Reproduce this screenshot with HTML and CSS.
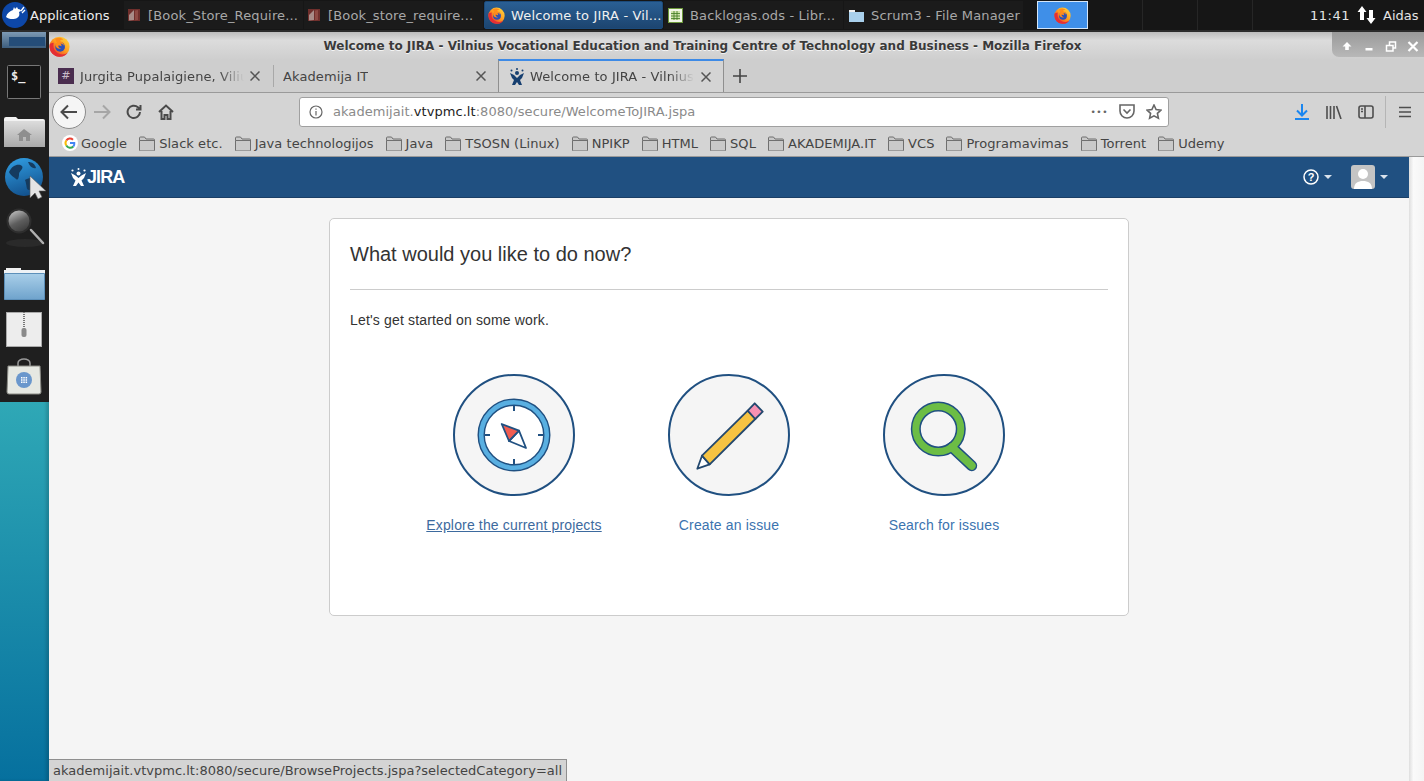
FILE: index.html
```html
<!DOCTYPE html>
<html lang="en">
  <head>
    <meta charset="UTF-8" />
    <meta name="viewport" content="width=device-width, initial-scale=1.0" />
    <title>Welcome to JIRA</title>
    <link rel="stylesheet" href="styles.css">
  </head>
  <body>
    <svg class="defs" width="0" height="0">
      <defs>
        <linearGradient id="fx-body" x1="0.9" y1="0.1" x2="0.2" y2="0.9">
          <stop offset="0" stop-color="#ffd23a" />
          <stop offset="0.5" stop-color="#ff9a1f" />
          <stop offset="1" stop-color="#e8342f" />
        </linearGradient>
        <linearGradient id="globe-fill" x1="0.3" y1="0" x2="0.6" y2="1">
          <stop offset="0" stop-color="#2f9ade" />
          <stop offset="1" stop-color="#12508c" />
        </linearGradient>
        <linearGradient id="lens-fill" x1="0.2" y1="0" x2="0.7" y2="1">
          <stop offset="0" stop-color="#c8c8c8" />
          <stop offset="0.55" stop-color="#5e5e5e" />
          <stop offset="1" stop-color="#3a3a3a" />
        </linearGradient>
        <linearGradient id="folder-fill" x1="0" y1="0" x2="0" y2="1">
          <stop offset="0" stop-color="#a9cfe9" />
          <stop offset="1" stop-color="#6fa3cc" />
        </linearGradient>
        <linearGradient id="home-fill" x1="0" y1="0" x2="0" y2="1">
          <stop offset="0" stop-color="#dcdcdc" />
          <stop offset="1" stop-color="#a9a9a9" />
        </linearGradient>
        <linearGradient id="drawer-fill" x1="0" y1="0" x2="0" y2="1">
          <stop offset="0" stop-color="#7d9ab4" />
          <stop offset="1" stop-color="#3d5d7c" />
        </linearGradient>
      </defs>
      <symbol id="firefox" viewBox="0 0 20 20">
        <circle cx="10" cy="10.200" r="9.600" fill="url(#fx-body)" />
        <path d="M.6 8c-.6 5 2.600 11 9 11.800 4 .3 7-1.500 8.500-4.300-2.500 2.300-6.500 2.800-9.600 1C5 14.500 3.500 11 4.500 6.500 3 6.800 1.500 7.200.6 8z" fill="#e42f35" />
        <circle cx="10.600" cy="10.400" r="4.600" fill="#2a50b8" />
        <path d="M6 2.500c3-1.300 6-.8 7.500 1-1.500-.2-2.700.3-3.200 1.300 2.200.5 4 2.300 4 4.800-.5-1.500-2-2.300-3.500-2.400 1 .7 1.300 1.700 1 2.500-.7-.5-1.800-.7-3-.5 0 1.300 1 2.500 2.800 2.800-2.500.8-5-.8-5.500-3 0-1.300.6-2.200 1.800-2.700C6.800 5.500 6.200 4 6 2.500z" fill="#ff8c1a" />
      </symbol>
      <symbol id="doc" viewBox="0 0 14 14">
        <path d="M1 1h12v12H1z" fill="#6f2f2c" />
        <path d="M2 7l5-5v10l-5 .5z" fill="#a88c88" />
        <path d="M8 2.500l3-.500v10l-3 .300z" fill="#8e4a44" />
      </symbol>
      <symbol id="folder" viewBox="0 0 16 15">
        <path d="M.5 4.500v-2.500a1 1 0 0 1 1-1h4l1.500 2h7.500a1 1 0 0 1 1 1v10a1 1 0 0 1-1 1H1.500a1 1 0 0 1-1-1z" fill="#c9c9c9" stroke="#6f6f6f" />
        <path d="M.5 4.500h15" stroke="#6f6f6f" />
      </symbol>
    </svg>

    <div class="panel">
      <div class="panel-apps">
        <svg class="whisker" width="26" height="26" viewBox="0 0 26 26">
          <circle cx="13" cy="13" r="13" fill="#0d47a8" />
          <path d="M4 15c1-4 4-6 7-7l1-3 1 2 2-2 1 2c2 0 3 1 3 2l-2 1c1 3 0 5-2 6-3 2-9 1-11-1z" fill="#fff" />
          <path d="M19 9l3-4M20 11l3-3" stroke="#fff" stroke-width="1.300" />
        </svg>
        <span>Applications</span>
      </div>
      <div class="tasks">
        <div class="task">
          <svg width="14" height="14"><use href="#doc" /></svg>
          <span class="task-label">[Book_Store_Require...</span>
        </div>
        <div class="task">
          <svg width="14" height="14"><use href="#doc" /></svg>
          <span class="task-label">[Book_store_require...</span>
        </div>
        <div class="task task-active">
          <svg width="17" height="17"><use href="#firefox" /></svg>
          <span class="task-label">Welcome to JIRA - Vil...</span>
        </div>
        <div class="task task-calc">
          <svg width="15" height="15" viewBox="0 0 15 15">
            <rect x=".5" y=".5" width="14" height="14" fill="#f2f6e8" stroke="#6d9a3a" />
            <path d="M3 3h9v9H3z" fill="#cfe3ac" />
            <path d="M3 5.500h9M3 8h9M3 10.500h9M6 3v9M9 3v9" stroke="#3f7a1f" stroke-width=".8" />
          </svg>
          <span class="task-label">Backlogas.ods - Libr...</span>
        </div>
        <div class="task task-files">
          <svg width="15" height="13" viewBox="0 0 15 13">
            <path d="M0 2h5l1 1h9v10H0z" fill="#a9d0ec" />
            <path d="M0 1h6v2H0z" fill="#f0f0f0" />
          </svg>
          <span class="task-label">Scrum3 - File Manager</span>
        </div>
      </div>
      <div class="pager">
        <div class="pager-cell pager-on">
          <svg width="17" height="17"><use href="#firefox" /></svg>
        </div>
        <div class="pager-cell"></div>
        <div class="pager-cell"></div>
        <div class="pager-cell"></div>
      </div>
      <div class="clock">11:41</div>
      <svg class="net" width="20" height="20" viewBox="0 0 20 20">
        <path d="M5 0L.5 6H3v8h4V6h2.500zM14 18l4.500-6H16V4h-4v8H9.500z" fill="#fff" />
      </svg>
      <div class="user">Aidas</div>
    </div>

    <div class="desktop">
      <div class="dock">
        <svg class="dock-icons" width="49" height="370" viewBox="0 32 49 370">
          <rect x="0" y="32" width="49" height="370" fill="#1f1f1f" />
          <rect x="2" y="32" width="44" height="16" fill="url(#drawer-fill)" />
          <rect x="9" y="37" width="36" height="9" fill="#254d78" />

          <rect x="7.500" y="65.500" width="33" height="33" rx="1" fill="#141414" stroke="#777" />
          <text x="11" y="80" class="dock-term">$_</text>

          <path d="M4 119a2 2 0 0 1 2-2h10l2 2h25a2 2 0 0 1 2 2v26H4z" fill="#f2f2f2" />
          <rect x="4" y="121" width="41" height="26" fill="url(#home-fill)" />
          <path d="M24 129l-7 6h2v6h4v-4h3v4h4v-6h2z" fill="#8f8f8f" />

          <circle cx="24" cy="177" r="19" fill="url(#globe-fill)" />
          <path d="M9 172c3-7 10-9 13-6 2 3-3 5-3 8s-1 7-3 5-6-4-7-7zM25 180c4-3 9-2 10 1s-3 9-6 9-2-5-4-10zM28 162c4 0 7 2 8 6-3 1-6-1-8-6z" fill="#153b5f" />
          <path d="M30 176v22l5-5 3 6 4-2-3-6h7z" fill="#e4e4e4" stroke="#555" stroke-width=".6" />

          <ellipse cx="25" cy="243" rx="19" ry="4" fill="#2a2a2a" />
          <path d="M31 230l12 13" stroke="#b0b0b0" stroke-width="2.500" stroke-linecap="round" />
          <circle cx="19" cy="221" r="11.500" fill="url(#lens-fill)" stroke="#2e2e2e" stroke-width="2" />

          <path d="M6 268h15v3h-15z" fill="#f0f0f0" />
          <path d="M4 270h41v4H4z" fill="#eef2f5" />
          <path d="M4.500 273.500h40v26h-40z" fill="url(#folder-fill)" stroke="#5c90ba" />

          <rect x="6.500" y="312.500" width="35" height="34" fill="#ededed" stroke="#aaa" />
          <path d="M24 312v20" stroke="#777" stroke-width="2" stroke-dasharray="1 1" />
          <rect x="21.500" y="328" width="5" height="9" rx="2" fill="#8a8a8a" />

          <path d="M18 369v-6a6 4 0 0 1 12 0v6" fill="none" stroke="#999" stroke-width="1.500" />
          <path d="M8 366h32l1 26a2 2 0 0 1-2 2H9a2 2 0 0 1-2-2z" fill="#e6e8e2" stroke="#8a8a84" />
          <circle cx="24" cy="380" r="8" fill="#6a97cc" />
          <path d="M21 377h1.500v1.500H21zM23.300 377h1.500v1.500h-1.500zM25.600 377h1.500v1.500h-1.500zM21 379.300h1.500v1.500H21zM23.300 379.300h1.500v1.500h-1.500zM25.600 379.300h1.500v1.500h-1.500zM21 381.600h1.500v1.500H21zM23.300 381.600h1.500v1.500h-1.500zM25.600 381.600h1.500v1.500h-1.500z" fill="#fff" />
        </svg>
      </div>

      <div class="window">
        <div class="titlebar">
          <svg class="title-icon" width="21" height="21"><use href="#firefox" /></svg>
          <div class="title-text">Welcome to JIRA - Vilnius Vocational Education and Training Centre of Technology and Business - Mozilla Firefox</div>
          <div class="win-controls">
            <svg width="92" height="25" viewBox="0 0 92 25" fill="#fff">
              <path d="M15 10l-4.500 4.500h2.700V18h3.600v-3.500h2.700z" />
              <rect x="33.500" y="16" width="7" height="2.500" />
              <path d="M54.500 13.500h6.500v5.500h-6.500zM57.500 13v-3h6v6h-2.500" fill="none" stroke="#fff" stroke-width="1.500" />
              <path d="M76.500 10l9 9M85.500 10l-9 9" stroke="#fff" stroke-width="2.200" />
            </svg>
          </div>
        </div>

        <div class="tabstrip">
          <div class="tab tab-first">
            <span class="slack-mark">#</span>
            <span class="tab-label">Jurgita Pupalaigiene, Viliu</span>
            <svg class="tab-close" width="10" height="10" viewBox="0 0 10 10"><path d="M.5.500l9 9M9.500.500l-9 9" /></svg>
          </div>
          <div class="tab tab-second">
            <span class="tab-label">Akademija IT</span>
            <svg class="tab-close" width="10" height="10" viewBox="0 0 10 10"><path d="M.5.500l9 9M9.500.500l-9 9" /></svg>
          </div>
          <div class="tab tab-active">
            <svg width="16" height="17" viewBox="0 0 16 17" fill="#163f70">
              <circle cx="8" cy="5" r="2" />
              <circle cx="2.500" cy="2.500" r="1" />
              <circle cx="13.500" cy="2.500" r="1" />
              <circle cx="8" cy="1" r="1" />
              <path d="M1 5l4 2 3 3 3-3 4-2-2 5-2 2 2 5h-3l-2-3-2 3H3l2-5-2-2z" />
            </svg>
            <span class="tab-label">Welcome to JIRA - Vilnius</span>
            <svg class="tab-close" width="10" height="10" viewBox="0 0 10 10"><path d="M.5.500l9 9M9.500.500l-9 9" /></svg>
          </div>
          <svg class="new-tab" width="14" height="14" viewBox="0 0 14 14"><path d="M7 0v14M0 7h14" /></svg>
        </div>

        <div class="navbar">
          <div class="back">
            <svg width="18" height="16" viewBox="0 0 18 16"><path d="M17 8H2M8 1.500L1.500 8 8 14.500" /></svg>
          </div>
          <svg class="nav-btn nav-off" width="18" height="16" viewBox="0 0 18 16"><path d="M1 8h15M10 1.500L16.500 8 10 14.500" /></svg>
          <svg class="nav-btn" width="16" height="16" viewBox="0 0 16 16"><path d="M14 8a6.200 6.200 0 1 1-2-4.700L14 5M14.500 1v4.500H10" /></svg>
          <svg class="nav-btn" width="16" height="16" viewBox="0 0 16 16"><path d="M1 8l7-6.500L15 8M3.500 7v8h3v-4h3v4h3V7" /></svg>
          <div class="urlbar">
            <svg class="url-info" width="14" height="14" viewBox="0 0 14 14">
              <circle cx="7" cy="7" r="6" />
              <path d="M7 6v4.500M7 3.500v1.300" />
            </svg>
            <div class="url-text">akademijait.<b>vtvpmc.lt</b>:8080/secure/WelcomeToJIRA.jspa</div>
            <span class="url-dots">•••</span>
            <svg class="url-pocket" width="16" height="15" viewBox="0 0 16 15">
              <path d="M1 1h14v6a7 7 0 0 1-14 0z" />
              <path d="M4.500 5.500L8 9l3.500-3.500" />
            </svg>
            <svg class="url-star" width="16" height="16" viewBox="0 0 16 16">
              <path d="M8 1l2.100 4.500 4.900.6-3.600 3.300 1 4.800L8 11.800l-4.400 2.400 1-4.800L1 6.100l4.900-.6z" />
            </svg>
          </div>
          <div class="nav-right">
            <svg class="dl-icon" width="14" height="16" viewBox="0 0 14 16"><path d="M7 0v11M2 6.500L7 11.500l5-5M0 15h14" /></svg>
            <svg class="tool-icon" width="16" height="14" viewBox="0 0 16 14"><path d="M1 1v13M4.500 1v13M8 1v13M10.500 1L15 14" /></svg>
            <svg class="tool-icon" width="16" height="14" viewBox="0 0 16 14"><rect x="1" y="1" width="14" height="12" rx="2" /><path d="M7 1v12M3 4h2M3 6.500h2" /></svg>
            <div class="nav-sep"></div>
            <svg class="tool-icon" width="12" height="12" viewBox="0 0 12 12"><path d="M0 1.500h12M0 6h12M0 10.500h12" /></svg>
          </div>
        </div>

        <div class="bookmarks">
          <div class="bm bm-google">
            <svg width="16" height="16" viewBox="0 0 16 16">
              <circle cx="8" cy="8" r="8" fill="#fff" />
              <path d="M4.300 5.500A4.500 4.500 0 0 1 11 4.700" fill="none" stroke="#ea4335" stroke-width="2" />
              <path d="M4.300 5.500a4.500 4.500 0 0 0 0 5" fill="none" stroke="#fbbc05" stroke-width="2" />
              <path d="M4.300 10.500a4.500 4.500 0 0 0 7 1" fill="none" stroke="#34a853" stroke-width="2" />
              <path d="M8 8h4.300a4.500 4.500 0 0 1-1 3.500" fill="none" stroke="#4285f4" stroke-width="2" />
            </svg>
            <span>Google</span>
          </div>
          <div class="bm"><svg width="16" height="15"><use href="#folder" /></svg><span>Slack etc.</span></div>
          <div class="bm"><svg width="16" height="15"><use href="#folder" /></svg><span>Java technologijos</span></div>
          <div class="bm"><svg width="16" height="15"><use href="#folder" /></svg><span>Java</span></div>
          <div class="bm"><svg width="16" height="15"><use href="#folder" /></svg><span>TSOSN (Linux)</span></div>
          <div class="bm"><svg width="16" height="15"><use href="#folder" /></svg><span>NPIKP</span></div>
          <div class="bm"><svg width="16" height="15"><use href="#folder" /></svg><span>HTML</span></div>
          <div class="bm"><svg width="16" height="15"><use href="#folder" /></svg><span>SQL</span></div>
          <div class="bm"><svg width="16" height="15"><use href="#folder" /></svg><span>AKADEMIJA.IT</span></div>
          <div class="bm"><svg width="16" height="15"><use href="#folder" /></svg><span>VCS</span></div>
          <div class="bm"><svg width="16" height="15"><use href="#folder" /></svg><span>Programavimas</span></div>
          <div class="bm"><svg width="16" height="15"><use href="#folder" /></svg><span>Torrent</span></div>
          <div class="bm"><svg width="16" height="15"><use href="#folder" /></svg><span>Udemy</span></div>
        </div>

        <div class="page">
          <div class="page-main">
            <header class="jira-header">
              <div class="jira-logo">
                <svg width="17" height="19" viewBox="0 0 17 19" fill="#fff">
                  <circle cx="8.500" cy="5.500" r="2" />
                  <circle cx="2.500" cy="2.500" r="1.100" />
                  <circle cx="14.500" cy="2.500" r="1.100" />
                  <circle cx="8.500" cy="1" r="1" />
                  <path d="M1 5l4.500 2.500 3 2.500 3-2.500L16 5l-2 5-2.500 2.500L14 18h-3l-2.500-3.500L6 18H3l2.500-5.500L3 10z" />
                </svg>
                <span>JIRA</span>
              </div>
              <div class="jira-tools">
                <svg width="16" height="16" viewBox="0 0 16 16">
                  <circle cx="8" cy="8" r="7" fill="none" stroke="#fff" stroke-width="1.500" />
                  <text x="8" y="12" class="help-mark">?</text>
                </svg>
                <span class="caret caret-help"></span>
                <svg class="avatar" width="24" height="24" viewBox="0 0 24 24">
                  <rect width="24" height="24" rx="3" fill="#c4c4c4" />
                  <circle cx="12" cy="9" r="5" fill="#fff" />
                  <path d="M3 24c0-6 4-8 9-8s9 2 9 8z" fill="#fff" />
                </svg>
                <span class="caret"></span>
              </div>
            </header>
            <main class="card">
              <h2>What would you like to do now?</h2>
              <p>Let's get started on some work.</p>
              <div class="actions">
                <div class="action">
                  <svg width="122" height="122" viewBox="0 0 122 122">
                    <circle cx="61" cy="61" r="60" class="disc" />
                    <circle cx="61" cy="61" r="32.800" fill="#fff" stroke="#205081" stroke-width="7.400" />
                    <circle cx="61" cy="61" r="32.800" fill="none" stroke="#59afe1" stroke-width="4.600" />
                    <path d="M61 32v5M61 85v5M32 61h5M85 61h5" stroke="#205081" stroke-width="2" />
                    <path d="M66 56.700L73 74 56 67z" fill="#fff" stroke="#205081" stroke-width="1.800" stroke-linejoin="round" />
                    <path d="M48.700 50L66 56.700 56 67z" fill="#f15c50" stroke="#205081" stroke-width="1.800" stroke-linejoin="round" />
                  </svg>
                  <a class="underlined" href="#">Explore the current projects</a>
                </div>
                <div class="action">
                  <svg width="122" height="122" viewBox="0 0 122 122">
                    <circle cx="61" cy="61" r="60" class="disc" />
                    <path d="M34 81.700L41.700 90.300 29.300 94.700z" fill="#fff" stroke="#23486e" stroke-width="1.800" stroke-linejoin="round" />
                    <path d="M34 81.700L41.700 90.300 87.300 45 79.700 36.700z" fill="#f6c342" stroke="#23486e" stroke-width="1.800" stroke-linejoin="round" />
                    <path d="M79.700 36.700L87.300 45 94.700 37.700 86.700 29.300z" fill="#f691b2" stroke="#23486e" stroke-width="1.800" stroke-linejoin="round" />
                  </svg>
                  <a href="#">Create an issue</a>
                </div>
                <div class="action">
                  <svg width="122" height="122" viewBox="0 0 122 122">
                    <circle cx="61" cy="61" r="60" class="disc" />
                    <path d="M69 73.300L88.700 91.700" stroke="#205081" stroke-width="11" stroke-linecap="round" />
                    <circle cx="55.300" cy="55" r="22.500" fill="none" stroke="#205081" stroke-width="10" />
                    <path d="M69 73.300L88.700 91.700" stroke="#6cbd45" stroke-width="8" stroke-linecap="round" />
                    <circle cx="55.300" cy="55" r="22.500" fill="none" stroke="#6cbd45" stroke-width="7" />
                  </svg>
                  <a href="#">Search for issues</a>
                </div>
              </div>
            </main>
          </div>
          <div class="page-edge"></div>
        </div>

        <div class="status">akademijait.vtvpmc.lt:8080/secure/BrowseProjects.jspa?selectedCategory=all</div>
      </div>
    </div>
  </body>
</html>
```

FILE: styles.css
```css
html,
body {
  margin: 0;
  padding: 0;
  height: 100%;
  overflow: hidden;
}
body {
  width: 1424px;
  height: 781px;
  font-family: "DejaVu Sans", sans-serif;
  background-color: #000;
  display: flex;
  flex-direction: column;
}
.defs {
  position: absolute;
}

/* top panel */
.panel {
  height: 32px;
  flex: none;
  box-sizing: border-box;
  border-bottom: 2px solid #2b2b2b;
  background-color: #161616;
  color: #d8d8d8;
  font-size: 13px;
  display: flex;
  align-items: center;
}
.panel-apps {
  width: 124px;
  flex: none;
  box-sizing: border-box;
  padding-left: 2px;
  display: flex;
  align-items: center;
  gap: 2px;
  color: #eee;
}
.tasks {
  display: flex;
  gap: 1px;
  width: 901px;
  flex: none;
  height: 30px;
  align-items: center;
}
.task {
  width: 179px;
  height: 28px;
  flex: none;
  box-sizing: border-box;
  padding-left: 3px;
  background-color: #1b1b1b;
  color: #a8a8a8;
  display: flex;
  align-items: center;
  gap: 7px;
  white-space: nowrap;
  letter-spacing: 0.15px;
}
.task-active {
  background: linear-gradient(#2a5f94, #1d4570);
  border: 1px solid #1b4a7a;
  border-radius: 2px;
  color: #f0f0f0;
  gap: 6px;
  padding-left: 3px;
}
.task-calc {
  padding-left: 4px;
}
.task-files {
  padding-left: 5px;
}
.pager {
  display: flex;
  width: 269px;
  flex: none;
  margin-left: 12px;
  height: 30px;
}
.pager-cell {
  width: 54px;
  flex: none;
  border-right: 1px solid #262626;
  display: flex;
  align-items: center;
  justify-content: center;
}
.pager-on {
  width: 51px;
  box-sizing: border-box;
  margin: 1px 0;
  background-color: #3f8fe8;
  border: 1px solid #d5e6f8;
}
.clock {
  margin-left: 1px;
  width: 46px;
  text-align: center;
  color: #e4e4e4;
  letter-spacing: 0.5px;
}
.net {
  flex: none;
  margin-left: 4px;
  margin-top: 2px;
}
.user {
  margin-left: 6px;
  color: #e4e4e4;
}

.desktop {
  flex: 1;
  display: flex;
  min-height: 0;
}

/* left dock */
.dock {
  width: 49px;
  flex: none;
  background: linear-gradient(#2fa8b6 0, #2fa8b6 370px, #06709e 100%);
  box-shadow: inset -3px 0 3px rgba(0, 0, 0, 0.15);
}
.dock-icons {
  display: block;
}
.dock-term {
  font-family: "DejaVu Sans Mono", monospace;
  font-size: 12px;
  font-weight: bold;
  fill: #eee;
}

/* browser window */
.window {
  flex: 1;
  min-width: 0;
  display: flex;
  flex-direction: column;
  position: relative;
}
.titlebar {
  height: 28px;
  flex: none;
  background: linear-gradient(#bcbcbc, #dcdcdc 30%, #cecece);
  display: flex;
}
.title-icon {
  flex: none;
  margin: 4px 0 0 0;
}
.title-text {
  flex: 1;
  text-align: center;
  font-size: 12px;
  font-weight: bold;
  line-height: 29px;
  padding-left: 3px;
  color: #3a3a3a;
  text-shadow: 0 1px 0 #f4f4f4;
  white-space: nowrap;
}
.win-controls {
  width: 92px;
  height: 25px;
  flex: none;
  background: linear-gradient(#9a9a9a, #b8b8b8);
  border-bottom-left-radius: 7px;
}
.win-controls svg {
  display: block;
}
.tabstrip {
  height: 33px;
  flex: none;
  box-sizing: border-box;
  background-color: #cecece;
  border-bottom: 1px solid #9a9a9a;
  display: flex;
  align-items: stretch;
  font-size: 13px;
  letter-spacing: 0.1px;
  color: #444;
  padding-left: 1px;
}
.tab {
  width: 224px;
  flex: none;
  box-sizing: border-box;
  display: flex;
  align-items: center;
  white-space: nowrap;
  position: relative;
}
.tab-first {
  padding-left: 8px;
  gap: 6px;
}
.tab-first::after {
  content: "";
  position: absolute;
  right: 0;
  top: 5px;
  bottom: 5px;
  width: 1px;
  background-color: #a8a8a8;
}
.slack-mark {
  width: 16px;
  height: 16px;
  flex: none;
  background-color: #4a2d4f;
  color: #c9bcc9;
  font-size: 11px;
  line-height: 16px;
  text-align: center;
}
.tab-second {
  padding-left: 9px;
}
.tab-second .tab-close {
  margin-left: auto;
  margin-right: 12px;
}
.tab-active {
  width: 226px;
  height: 33px;
  padding-left: 10px;
  gap: 5px;
  border-top: 2px solid #3d8ae6;
  border-left: 1px solid #8f8f8f;
  border-right: 1px solid #8f8f8f;
  background-color: #d4d4d4;
  margin-top: -1px;
}
.tab-active .tab-close {
  margin-left: 2px;
}
.tab-label {
  width: 164px;
  overflow: hidden;
  -webkit-mask-image: linear-gradient(to right, #000 85%, transparent);
  mask-image: linear-gradient(to right, #000 85%, transparent);
}
.tab-second .tab-label {
  width: auto;
  -webkit-mask-image: none;
  mask-image: none;
}
.tab-close {
  flex: none;
}
.tab-close path {
  stroke: #555;
  stroke-width: 1.5;
  fill: none;
}
.new-tab {
  align-self: center;
  margin-left: 9px;
}
.new-tab path {
  stroke: #444;
  stroke-width: 1.6;
  fill: none;
}

/* nav toolbar */
.navbar {
  height: 37px;
  flex: none;
  box-sizing: border-box;
  background-color: #d4d4d4;
  display: flex;
  align-items: center;
  padding-left: 3px;
}
.navbar svg path,
.navbar svg circle,
.navbar svg rect {
  fill: none;
}
.back {
  width: 32px;
  height: 32px;
  flex: none;
  border-radius: 50%;
  background-color: #f5f5f5;
  border: 1px solid #8a8a8a;
  display: flex;
  align-items: center;
  justify-content: center;
}
.back path,
.nav-btn path {
  stroke: #4a4a4a;
  stroke-width: 2;
}
.nav-btn {
  flex: none;
  margin-left: 16px;
}
.back + .nav-btn {
  margin-left: 7px;
}
.nav-off + .nav-btn {
  margin-left: 15px;
}
.urlbar {
  width: 870px;
  height: 30px;
  flex: none;
  box-sizing: border-box;
  margin-left: 125px;
  background-color: #fff;
  border: 1px solid #a0a0a0;
  border-radius: 3px;
  display: flex;
  align-items: center;
  font-size: 13px;
  letter-spacing: 0.05px;
  color: #8a8a8a;
  padding-left: 9px;
}
.nav-off path {
  stroke: #a6a6a6;
}
.url-info {
  flex: none;
}
.url-info circle,
.url-info path {
  stroke: #666;
  stroke-width: 1.2;
}
.url-text {
  flex: 1;
  margin-left: 10px;
  white-space: nowrap;
}
.url-text b {
  font-weight: normal;
  color: #222;
}
.url-dots {
  font-size: 9px;
  letter-spacing: 0.5px;
  color: #666;
}
.url-pocket,
.url-star {
  flex: none;
  margin-left: 11px;
}
.url-pocket path,
.url-star path {
  stroke: #666;
  stroke-width: 1.6;
}
.url-star {
  margin-right: 6px;
}
.nav-right {
  flex: 1;
  display: flex;
  align-items: center;
  padding-left: 126px;
}
.dl-icon path {
  stroke: #1a86f0;
  stroke-width: 2;
}
.tool-icon path,
.tool-icon rect {
  stroke: #4e4e4e;
  stroke-width: 1.6;
}
.nav-right .tool-icon {
  margin-left: 17px;
  flex: none;
}
.nav-right .tool-icon + .tool-icon {
  margin-left: 16px;
}
.nav-sep {
  width: 1px;
  height: 32px;
  background-color: #b5b5b5;
  margin-left: 11px;
}
.nav-right .nav-sep + .tool-icon {
  margin-left: 13px;
}

/* bookmarks toolbar */
.bookmarks {
  height: 27px;
  flex: none;
  box-sizing: border-box;
  background-color: #d4d4d4;
  border-bottom: 1px solid #9a9a9a;
  display: flex;
  align-items: center;
  padding-left: 13px;
  font-size: 13px;
  letter-spacing: 0.05px;
  color: #444;
  gap: 12px;
  white-space: nowrap;
}
.bm {
  display: flex;
  align-items: center;
  gap: 4px;
}
.bm-google {
  gap: 3px;
}

/* jira page */
.page {
  flex: 1;
  min-height: 0;
  display: flex;
  font-family: "Liberation Sans", Arial, sans-serif;
  font-size: 14px;
  color: #333;
}
.page-main {
  flex: 1;
  min-width: 0;
  background-color: #f5f5f5;
}
.page-edge {
  width: 15px;
  flex: none;
  background: linear-gradient(to right, #dedede, #fafafa 30%, #f4f4f4);
}
.jira-header {
  height: 41px;
  box-sizing: border-box;
  background-color: #205081;
  border-bottom: 1px solid #1b3f66;
  display: flex;
  align-items: center;
  justify-content: space-between;
  padding: 0 21px 0 21px;
}
.jira-logo {
  display: flex;
  align-items: center;
  gap: 0;
  color: #fff;
  font-size: 18px;
  font-weight: bold;
  letter-spacing: -0.9px;
}
.jira-tools {
  display: flex;
  align-items: center;
}
.help-mark {
  font-family: "Liberation Sans", sans-serif;
  font-size: 11px;
  font-weight: bold;
  fill: #fff;
  text-anchor: middle;
}
.caret {
  width: 0;
  height: 0;
  margin-left: 5px;
  border-left: 4px solid transparent;
  border-right: 4px solid transparent;
  border-top: 4px solid #d9e2ec;
}
.caret-help {
  margin-right: 19px;
}
.card {
  width: 800px;
  height: 398px;
  box-sizing: border-box;
  margin: 20px auto 0;
  padding: 21px 20px 0;
  background-color: #fff;
  border: 1px solid #ccc;
  border-radius: 5px;
}
.card h2 {
  margin: 0;
  padding-bottom: 21px;
  border-bottom: 1px solid #ccc;
  font-size: 20px;
  font-weight: normal;
  line-height: 28px;
  color: #333;
}
.card p {
  margin: 20px 0 0;
  line-height: 20px;
  letter-spacing: 0.16px;
}
.actions {
  margin-top: 44px;
  display: flex;
  justify-content: center;
}
.action {
  width: 215px;
  flex: none;
  display: flex;
  flex-direction: column;
  align-items: center;
}
.action svg {
  display: block;
}
.disc {
  fill: #f5f5f5;
  stroke: #205081;
  stroke-width: 2;
}
.action a {
  margin-top: 19px;
  line-height: 20px;
  letter-spacing: 0.15px;
  color: #3b73af;
  text-decoration: none;
}
.action a.underlined {
  color: #3d6a9e;
  text-decoration: underline;
}

/* link hover status */
.status {
  position: absolute;
  left: 0;
  bottom: 0;
  height: 22px;
  box-sizing: border-box;
  padding: 0 4px;
  background-color: #d4d4d4;
  border-top: 1px solid #8f8f8f;
  border-right: 1px solid #8f8f8f;
  font-size: 13px;
  letter-spacing: 0.02px;
  line-height: 21px;
  color: #444;
  white-space: nowrap;
}
```
